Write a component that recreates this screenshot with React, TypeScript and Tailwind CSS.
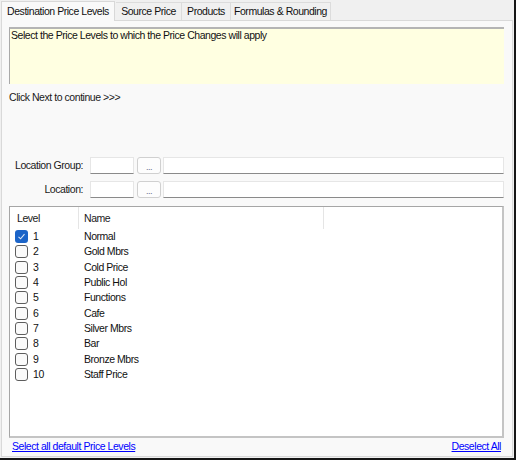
import React from "react";

const levels = [
  { n: 1, name: "Normal", checked: true },
  { n: 2, name: "Gold Mbrs" },
  { n: 3, name: "Cold Price" },
  { n: 4, name: "Public Hol" },
  { n: 5, name: "Functions" },
  { n: 6, name: "Cafe" },
  { n: 7, name: "Silver Mbrs" },
  { n: 8, name: "Bar" },
  { n: 9, name: "Bronze Mbrs" },
  { n: 10, name: "Staff Price" },
];

function Check({ checked }: { checked?: boolean }) {
  return checked ? (
    <div className="w-[13px] h-[13px] rounded-[3px] bg-[#1b64c8] flex items-center justify-center shrink-0">
      <svg width="9" height="9" viewBox="0 0 9 9">
        <path d="M1.5 4.8 L3.6 6.8 L7.5 2.2" stroke="#dbe7f7" strokeWidth="1.1" fill="none" />
      </svg>
    </div>
  ) : (
    <div className="w-[13px] h-[13px] rounded-[3px] border border-[#5d5d5d] bg-[#fafafa] shrink-0" />
  );
}

function FieldRow({ label }: { label: string }) {
  return (
    <div className="flex items-center h-[17px]">
      <div className="w-[74px] text-right whitespace-nowrap text-[#1a1a1a]">{label}</div>
      <div className="ml-[7px] w-[44px] h-[17px] bg-white border border-[#e6e6e6] border-b-[#8a8a8a]" />
      <div className="ml-[3px] w-[24px] h-[17px] bg-[#fdfdfd] border border-[#d0d0d0] rounded-[3px] flex items-center justify-center text-[9px] text-[#6a6a8a] leading-none pt-[3px]">
        ...
      </div>
      <div className="ml-[2px] flex-1 mr-[1px] h-[17px] bg-white border border-[#e6e6e6] border-b-[#8a8a8a]" />
    </div>
  );
}

export default function App() {
  return (
    <div
      className="w-[516px] h-[460px] bg-[#f0f0f0] border-r-2 border-b-2 border-[#161616] flex flex-col text-[10.5px] leading-[13px] tracking-[-0.45px] text-[#111]"
      style={{ fontFamily: '"Liberation Sans", Arial, sans-serif' }}
    >
      <div className="h-[20px] flex items-end pl-[1px] shrink-0">
        <div className="h-[20px] w-[114px] bg-[#f9f9f9] border-t border-l border-r border-[#d8d8d8] flex items-center justify-center relative z-10 -mb-[1px]">
          Destination Price Levels
        </div>
        <div className="h-[18px] w-[66px] ml-[1px] bg-[#f0f0f0] border-t border-r border-[#dcdcdc] flex items-center justify-center">
          Source Price
        </div>
        <div className="h-[18px] w-[49px] bg-[#f0f0f0] border-t border-r border-[#dcdcdc] flex items-center justify-center">
          Products
        </div>
        <div className="h-[18px] w-[100px] bg-[#f0f0f0] border-t border-r border-[#dcdcdc] flex items-center justify-center">
          Formulas &amp; Rounding
        </div>
      </div>
      <div className="flex-1 ml-[1px] mr-[1px] mb-[1px] bg-[#f9f9f9] border border-[#d9d9d9] flex flex-col px-[7px] pt-[6px]">
        <div className="h-[57px] bg-[#ffffe1] border-t-2 border-l border-[#a9a9a9] border-t-[#b4b4b4] pl-[1px] pt-0 mr-[1px]">
          Select the Price Levels to which the Price Changes will apply
        </div>
        <div className="mt-[7px] text-[#1a1a1a]">Click Next to continue &gt;&gt;&gt;</div>
        <div className="mt-[53px] flex flex-col gap-[7px]">
          <FieldRow label="Location Group:" />
          <FieldRow label="Location:" />
        </div>
        <div className="mt-[8px] h-[232px] bg-white border border-[#a6a6a6] border-r-2 border-b-2 border-r-[#c4c4c4] border-b-[#c4c4c4] mr-[1px] flex flex-col">
          <div className="h-[22px] flex items-stretch text-[#1a1a1a]">
            <div className="w-[69px] pl-[7px] flex items-center border-r border-[#e5e5e5]">Level</div>
            <div className="w-[245px] pl-[5px] flex items-center border-r border-[#e5e5e5]">Name</div>
            <div className="flex-1" />
          </div>
          <div className="flex flex-col">
            {levels.map((l) => (
              <div key={l.n} className="h-[15.33px] flex items-center">
                <div className="w-[69px] pl-[5px] flex items-center gap-[5px]">
                  <Check checked={l.checked} />
                  <span>{l.n}</span>
                </div>
                <div className="pl-[5px]">{l.name}</div>
              </div>
            ))}
          </div>
        </div>
        <div className="flex justify-between mt-[2px] pl-[3px] pr-[4px] text-[#0000ff] underline">
          <span>Select all default Price Levels</span>
          <span>Deselect All</span>
        </div>
      </div>
    </div>
  );
}
